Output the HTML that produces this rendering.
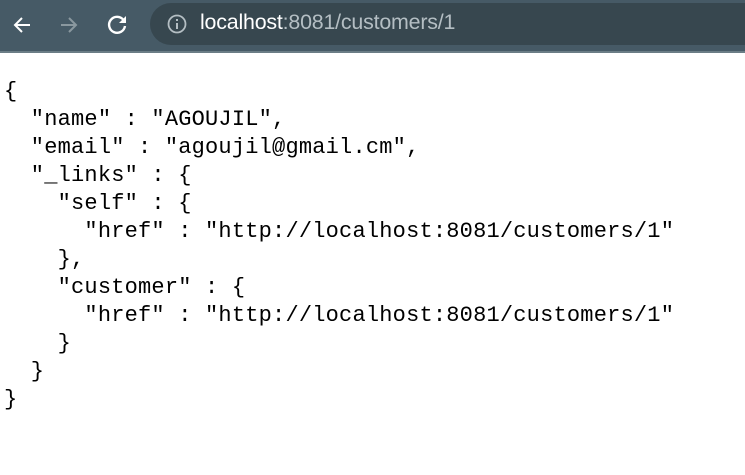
<!DOCTYPE html>
<html><head><meta charset="utf-8"><style>
html,body{margin:0;padding:0;width:745px;height:475px;overflow:hidden;background:#fff}
.bar{position:absolute;left:0;top:0;width:745px;height:51px;background:#465a66}
.line{position:absolute;left:0;top:51px;width:745px;height:2px;background:#6b7d86}
.pill{position:absolute;left:150px;top:3px;width:640px;height:42px;border-radius:21px;background:#37474f}
.url{position:absolute;left:200px;top:10px;font-family:"Liberation Sans",sans-serif;font-size:21.4px;color:#b4bec3;letter-spacing:-0.2px}
.url b{font-weight:normal;color:#fff}
pre{position:absolute;left:4px;top:78px;margin:0;font-family:"Liberation Mono",monospace;font-size:22px;line-height:28px;color:#000;letter-spacing:0.2px}
svg{position:absolute}
</style></head><body>
<div class="bar"></div><div class="line"></div><div class="pill"></div>
<svg style="left:10px;top:13px" width="24" height="24" viewBox="0 0 24 24"><path d="M20 12H5M12 5l-7 7 7 7" stroke="#fff" stroke-width="2" fill="none"/></svg>
<svg style="left:57px;top:13px" width="24" height="24" viewBox="0 0 24 24"><path d="M4 12h15M12 5l7 7-7 7" stroke="#8a989f" stroke-width="2" fill="none"/></svg>
<svg style="left:105px;top:12px" width="24" height="24" viewBox="0 0 24 24"><path d="M18.5 8A8 8 0 1 0 20 14" stroke="#fff" stroke-width="2.4" fill="none"/><path d="M21 4v7h-7z" fill="#fff"/></svg>
<svg style="left:166px;top:13px" width="22" height="22" viewBox="0 0 22 22"><circle cx="11" cy="11" r="8.5" stroke="#b4bec3" stroke-width="1.8" fill="none"/><rect x="10" y="10" width="2" height="6" fill="#b4bec3"/><rect x="10" y="6" width="2" height="2" fill="#b4bec3"/></svg>
<div class="url"><b>localhost</b>:8081/customers/1</div>
<pre>{
  "name" : "AGOUJIL",
  "email" : "agoujil@gmail.cm",
  "_links" : {
    "self" : {
      "href" : "http://localhost:8081/customers/1"
    },
    "customer" : {
      "href" : "http://localhost:8081/customers/1"
    }
  }
}</pre>
</body></html>
